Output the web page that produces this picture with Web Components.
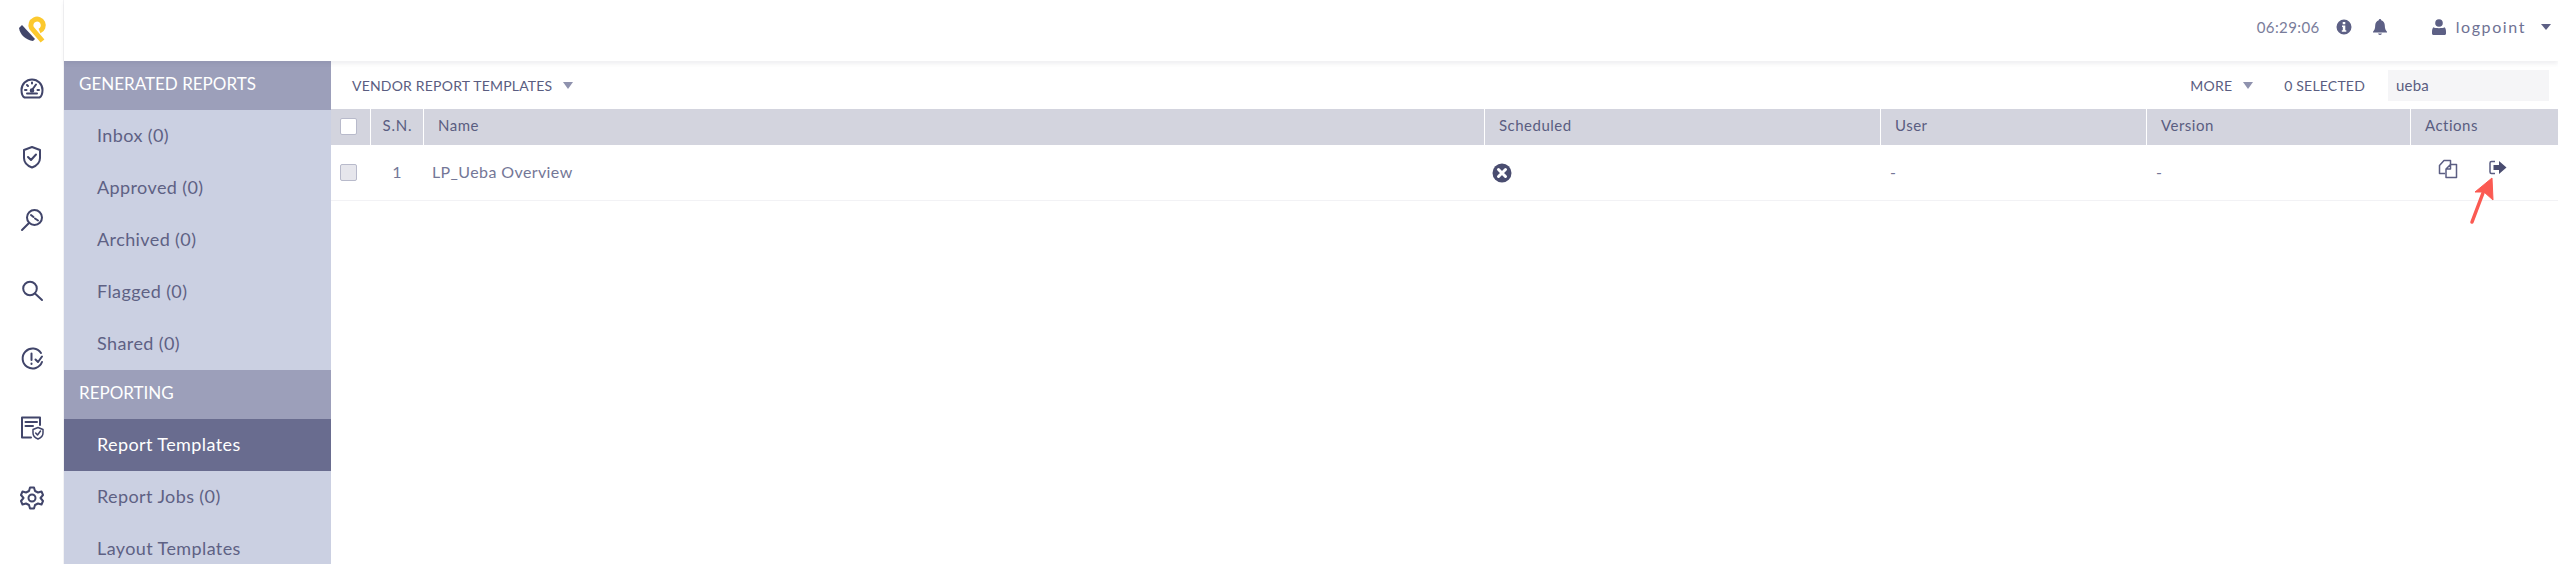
<!doctype html>
<html>
<head>
<meta charset="utf-8">
<title>Report Templates</title>
<style>
  html, body { margin: 0; height: 564px; overflow: hidden; background: #fff; }
  body { font-family: Lato, "Open Sans", sans-serif; color: #50537a; }
</style>
</head>
<body>
<lp-app>
  <lp-rail slot="rail"></lp-rail>
  <lp-topbar slot="top"></lp-topbar>
  <lp-sidebar slot="side">
    <lp-nav-head>GENERATED REPORTS</lp-nav-head>
    <lp-nav-item>Inbox (0)</lp-nav-item>
    <lp-nav-item>Approved (0)</lp-nav-item>
    <lp-nav-item>Archived (0)</lp-nav-item>
    <lp-nav-item>Flagged (0)</lp-nav-item>
    <lp-nav-item>Shared (0)</lp-nav-item>
    <lp-nav-head>REPORTING</lp-nav-head>
    <lp-nav-item active>Report Templates</lp-nav-item>
    <lp-nav-item>Report Jobs (0)</lp-nav-item>
    <lp-nav-item>Layout Templates</lp-nav-item>
  </lp-sidebar>
  <lp-main slot="main"></lp-main>
</lp-app>

<script>
  customElements.define(
    "lp-app",
    class extends HTMLElement {
      constructor() {
        super().attachShadow({ mode: "open" });
        this.shadowRoot.innerHTML = /*html*/ `
          <style>
            :host { display: grid; grid-template-columns: 64px 267px 1fr; grid-template-rows: 61px 503px; width: 2558px; height: 564px; overflow: hidden; }
            ::slotted([slot="rail"]) { grid-row: 1 / 3; grid-column: 1; }
            ::slotted([slot="top"]) { grid-row: 1; grid-column: 2 / 4; }
            ::slotted([slot="side"]) { grid-row: 2; grid-column: 2; }
            ::slotted([slot="main"]) { grid-row: 2; grid-column: 3; }
          </style>
          <slot name="rail"></slot>
          <slot name="top"></slot>
          <slot name="side"></slot>
          <slot name="main"></slot>
        `;
      }
    }
  );

  customElements.define(
    "lp-rail",
    class extends HTMLElement {
      constructor() {
        super().attachShadow({ mode: "open" });
        this.shadowRoot.innerHTML = /*html*/ `
          <style>
            :host { display: block; background: #fff; position: relative; box-shadow: inset -1px 0 0 #f3f3f5; }
            .stack { display: flex; flex-direction: column; align-items: center; padding-top: 15px; }
            svg { display: block; fill: none; stroke: #41456a; stroke-width: 2; stroke-linecap: round; stroke-linejoin: round; }
            .logo { margin-bottom: 33px; }
          </style>
          <div class="stack">
            <svg class="logo" width="30" height="28" viewBox="17 15 30 28" style="stroke:none">
              <path d="M19 28 L22 25 L35 39 L33 41 C26 40 20 35 19 28Z" fill="#41456a"/>
              <path d="M42.500 41 L31.500 28 A6.200 6.200 0 1 1 39.500 31" fill="none" stroke="#fcc92e" stroke-width="5" stroke-linecap="butt"/>
            </svg>
            <svg style="margin-bottom:45px" width="24" height="24" viewBox="0 0 24 24">
              <path d="M4.500 21.500 C2.500 20.500 1.500 18 1.500 14 A10.500 10.500 0 0 1 22.500 14 C22.500 18 21.500 20.500 19.500 21.500 Z"/>
              <path d="M12 14 L16 8.500 M5 14 H6.500 M17.500 14 H19 M12 6.500 V7.500 M7 9 L8 10"/>
              <circle cx="12" cy="14.500" r="1.300"/>
              <path d="M7 17.500 H17"/>
            </svg>
            <svg style="margin-bottom:39px" width="24" height="24" viewBox="0 0 24 24">
              <path d="M12 2 L20 5 V13 C20 18 16 21 12 22.500 C8 21 4 18 4 13 V5 Z"/>
              <path d="M8 12 L11 15 L16 9.500"/>
            </svg>
            <svg style="margin-bottom:47px" width="24" height="24" viewBox="0 0 24 24">
              <circle cx="14.500" cy="9.500" r="7.500"/>
              <path d="M9 15 L2 22 M11 7 L13.500 9 M15 10.500 L18 12.500"/>
            </svg>
            <svg style="margin-bottom:44px" width="24" height="24" viewBox="0 0 24 24">
              <circle cx="10" cy="9.500" r="6.800"/>
              <path d="M15 14.500 L22 21"/>
            </svg>
            <svg style="margin-bottom:45px" width="24" height="24" viewBox="0 0 24 24">
              <path d="M21 6 A10 10 0 1 0 22 15"/>
              <path d="M11.500 6.500 V13 M11.500 16.500 V17 M15.500 12.500 L18 15 L22 9.500"/>
            </svg>
            <svg style="margin-bottom:46px" width="24" height="24" viewBox="0 0 24 24">
              <path d="M11 21.500 H2 V1.500 H20 V9"/>
              <path d="M5.500 6 H17 M5.500 10 H13" />
              <path d="M18 11.500 L23 13.500 V17 C23 20 20.500 22 18 23 C15.500 22 13 20 13 17 V13.500 Z" stroke-width="1.500"/>
              <path d="M15.700 17 L17.500 19 L20.500 15" stroke-width="1.500"/>
            </svg>
            <svg width="24" height="24" viewBox="0 0 24 24">
              <path d="M10 1.500 H14 L15 5 L18 6.500 L21.500 5.500 L23 9 L20.500 12 L23 15 L21.500 18.500 L18 17.500 L15 19 L14 22.500 H10 L9 19 L6 17.500 L2.500 18.500 L1 15 L3.500 12 L1 9 L2.500 5.500 L6 6.500 L9 5 Z"/>
              <circle cx="12" cy="12" r="3.500"/>
            </svg>
          </div>
        `;
      }
    }
  );

  customElements.define(
    "lp-topbar",
    class extends HTMLElement {
      constructor() {
        super().attachShadow({ mode: "open" });
        this.shadowRoot.innerHTML = /*html*/ `
          <style>
            :host { display: flex; align-items: center; justify-content: flex-end; background: #fff; padding: 0 7px 8px 0; box-sizing: border-box; color: #7a7d9b; position: relative; z-index: 1; box-shadow: 0 3px 4px rgba(60,60,90,.08); }
            .time { font-size: 15px; letter-spacing: .4px; margin-right: 16px; }
            .user { font-size: 16px; letter-spacing: 1.6px; margin: 0 15px 0 10px; color: #6f7294; }
            svg { display: block; fill: #5d6085; }
            .bell { margin: 0 44px 0 20px; }
          </style>
          <span class="time">06:29:06</span>
          <svg width="16" height="16" viewBox="0 0 16 16"><path fill-rule="evenodd" d="M8 .5a7.500 7.500 0 1 0 0 15 7.500 7.500 0 0 0 0-15ZM6.700 3h2.600v2.300H6.700ZM6 6.500h3.300V11.200h1v1.600H5.800v-1.600h1V8.100H6Z"/></svg>
          <svg class="bell" width="16" height="16" viewBox="0 0 16 16"><path d="M8 0c.8 0 1.200.6 1.200 1.300C11.500 2 12.800 4 12.800 6.500c0 3 .8 4.800 2.200 6.300v.7H1v-.7c1.400-1.500 2.200-3.300 2.200-6.300C3.200 4 4.500 2 6.800 1.300 6.800.6 7.200 0 8 0ZM6 14.500h4A2 2 0 0 1 8 16a2 2 0 0 1-2-1.500Z"/></svg>
          <svg width="14" height="16" viewBox="0 0 14 16"><circle cx="7" cy="4" r="3.800"/><path d="M1.500 8.300C3 9.500 11 9.500 12.500 8.300 13.500 9 14 10.500 14 13v1.500C14 15.500 13 16 12 16H2C1 16 0 15.500 0 14.500V13C0 10.500.5 9 1.500 8.300Z"/></svg>
          <span class="user">logpoint</span>
          <svg width="10" height="6" viewBox="0 0 10 6"><path d="M0 0H10L5 6Z"/></svg>
        `;
      }
    }
  );

  customElements.define(
    "lp-sidebar",
    class extends HTMLElement {
      constructor() {
        super().attachShadow({ mode: "open" });
        this.shadowRoot.innerHTML = /*html*/ `
          <style>
            :host { display: block; background: #cbd0e2; overflow: hidden; }
          </style>
          <slot></slot>
        `;
      }
    }
  );

  customElements.define(
    "lp-nav-head",
    class extends HTMLElement {
      constructor() {
        super().attachShadow({ mode: "open" });
        this.shadowRoot.innerHTML = /*html*/ `
          <style>
            :host { display: flex; align-items: center; height: 49px; padding: 0 0 4px 15px; box-sizing: border-box; background: #9c9fba; color: #fff; font-size: 17px; }
          </style>
          <slot></slot>
        `;
      }
    }
  );

  customElements.define(
    "lp-nav-item",
    class extends HTMLElement {
      constructor() {
        super().attachShadow({ mode: "open" });
        this.shadowRoot.innerHTML = /*html*/ `
          <style>
            :host { display: flex; align-items: center; height: 52px; padding: 0 0 2px 33px; box-sizing: border-box; color: #5e6184; font-size: 18px; letter-spacing: .4px; }
            :host([active]) { background: #696c8f; color: #fff; }
          </style>
          <slot></slot>
        `;
      }
    }
  );

  customElements.define(
    "lp-drop",
    class extends HTMLElement {
      constructor() {
        super().attachShadow({ mode: "open" });
        this.shadowRoot.innerHTML = /*html*/ `
          <style>
            :host { display: inline-flex; align-items: center; gap: 11px; }
            i { width: 0; height: 0; border: 5.500px solid transparent; border-top: 7px solid #8f92ae; border-bottom: 0; }
          </style>
          <slot></slot><i></i>
        `;
      }
    }
  );

  customElements.define(
    "lp-main",
    class extends HTMLElement {
      constructor() {
        super().attachShadow({ mode: "open" });
        this.shadowRoot.innerHTML = /*html*/ `
          <style>
            :host { display: block; background: #fff; position: relative; overflow: hidden; }
            .bar { display: flex; align-items: center; height: 48px; padding: 0 9px 0 21px; box-sizing: border-box; font-size: 14px; letter-spacing: .2px; color: #5a5d81; }
            .more { margin-left: auto; }
            .sel { margin-left: 31px; }
            .search { margin-left: 23px; width: 161px; height: 31px; background: #f5f5f7; padding-left: 8px; box-sizing: border-box; display: flex; align-items: center; font-size: 15px; }
            .row { display: grid; grid-template-columns: 39px 52px 1060px 395px 265px 263px 1fr; column-gap: 1px; align-items: center; }
            .head { height: 36px; }
            .head > div { background: #d3d4de; height: 36px; display: flex; align-items: center; padding-left: 14px; box-sizing: border-box; font-size: 15px; letter-spacing: .5px; color: #5a5d81; padding-bottom: 5px; }
            .head > .sn { justify-content: center; padding-left: 1px; letter-spacing: .8px; }
            .body { height: 56px; border-bottom: 1px solid #f2f2f5; box-sizing: border-box; font-size: 16px; color: #747797; letter-spacing: .4px; }
            .body > div { padding-left: 9px; box-sizing: border-box; padding-bottom: 2px; }
            .body > .sn { text-align: center; padding-left: 0; }
            .box { display: block; width: 17px; height: 17px; box-sizing: border-box; border: 1px solid #b8bacb; border-radius: 2px; background: #fff; }
            .head > .cb, .body > .cb { padding: 0 0 0 9px; }
            .head > .cb { padding-bottom: 2px; }
            .off { background: #e6e6ec; }
            .x { display: block; margin-left: -2px; margin-top: 2px; }
            .acts { display: flex; gap: 30px; margin-top: -5px; padding-left: 18px; }
            .acts svg { display: block; fill: none; stroke: #5b5e83; stroke-width: 1.500; stroke-linejoin: round; }
            .arrow { position: absolute; left: 2137px; top: 116px; pointer-events: none; }
          </style>
          <div class="bar">
            <lp-drop>VENDOR REPORT TEMPLATES</lp-drop>
            <lp-drop class="more">MORE</lp-drop>
            <span class="sel">0 SELECTED</span>
            <span class="search">ueba</span>
          </div>
          <div class="row head">
            <div class="cb"><span class="box"></span></div>
            <div class="sn">S.N.</div>
            <div>Name</div>
            <div>Scheduled</div>
            <div>User</div>
            <div>Version</div>
            <div>Actions</div>
          </div>
          <div class="row body">
            <div class="cb"><span class="box off"></span></div>
            <div class="sn">1</div>
            <div style="padding-left:8px">LP_Ueba Overview</div>
            <div><svg class="x" width="20" height="20" viewBox="0 0 20 20"><circle cx="10" cy="10" r="9.500" fill="#4a4d70"/><path d="M6.500 6.500 13.500 13.500M13.500 6.500 6.500 13.500" stroke="#fff" stroke-width="3" stroke-linecap="round"/></svg></div>
            <div>-</div>
            <div>-</div>
            <div class="acts-cell">
              <div class="acts">
                <svg width="20" height="20" viewBox="0 0 20 20"><path d="M7 14.500H1.500V6.500L6 1.500H12.500V5.500"/><path d="M8 10 L12.500 5.500 H18.500 V18.500 H8 Z M12.500 5.500 V10 H8"/></svg>
                <svg width="20" height="18" viewBox="0 0 20 18"><path d="M7 2.500H3.500A1.500 1.500 0 0 0 2 4V13A1.500 1.500 0 0 0 3.500 14.500H7"/><path fill="#4a4d70" stroke="none" d="M5.500 6H11V2L18.500 8.500 11 15V11H5.500Z"/></svg>
              </div>
            </div>
          </div>
          <svg class="arrow" width="30" height="60" viewBox="0 0 30 60" fill="none">
            <path d="M4 45 L15 16" stroke="#fb5a52" stroke-width="3.500" stroke-linecap="round"/>
            <path d="M24 1 L7 15 L16 15 L25 23Z" fill="#fb5a52" stroke="#fb5a52" stroke-linejoin="round"/>
          </svg>
        `;
      }
    }
  );
</script>
</body>
</html>
